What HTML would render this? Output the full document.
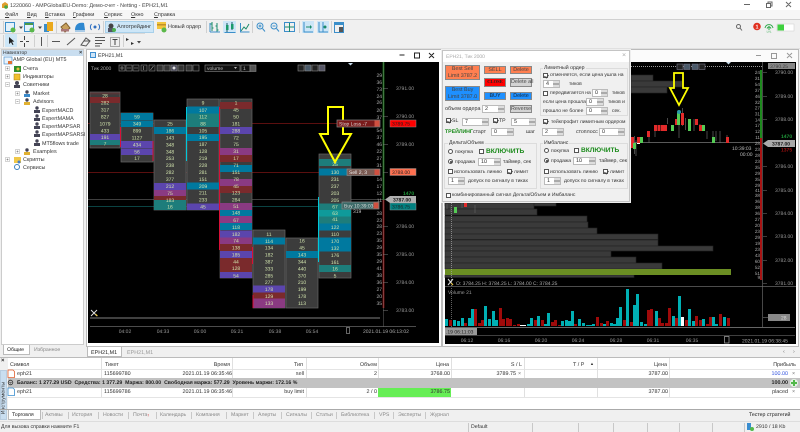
<!DOCTYPE html>
<html lang="ru"><head><meta charset="utf-8"><title>MT5</title>
<style>
*{box-sizing:border-box}
html,body{margin:0;padding:0;width:800px;height:432px;overflow:hidden;background:#f0f0f0}
body{position:relative;font-family:"Liberation Sans","DejaVu Sans",sans-serif;font-size:5.4px;color:#333;text-rendering:geometricPrecision;filter:blur(.3px)}
.t{position:absolute;white-space:nowrap;line-height:8px}
.b{position:absolute}
.sep{position:absolute;width:1px;background:#c8c8c8}
.btn{position:absolute;text-align:center;font-size:5.4px;color:#444;border:1px solid #888;white-space:nowrap}
.or{background:#ff7f50}.bl{background:#1e90ff}.gr{background:#d3d3d3}
.in{position:absolute;background:#fff;border:1px solid #bbb;height:8px;line-height:6px;font-size:5.4px;padding-left:2px;color:#333}
.in::after{content:"";position:absolute;right:0;top:0;width:6px;height:6px;background:linear-gradient(#ddd 0 2px,#777 2px 2.6px,#ddd 2.6px 3.4px,#777 3.4px 4px,#ddd 4px)}
.cb{position:absolute;width:5px;height:5px;background:#fff;border:.7px solid #555}
.cb.on::after{content:"";position:absolute;left:.6px;top:.1px;width:2px;height:3px;border:solid #444;border-width:0 .7px .7px 0;transform:rotate(40deg)}
.rd{position:absolute;width:5px;height:5px;background:#fff;border:.7px solid #555;border-radius:50%}
.rd.on::after{content:"";position:absolute;left:.8px;top:.8px;width:2px;height:2px;background:#333;border-radius:50%}
.gb{position:absolute;border:1px solid #dcdcdc}
.gt{position:absolute;background:#f0f0f0;padding:0 1px;line-height:6px;font-size:5.2px;white-space:nowrap}
.vv{color:#1a8a1a;font-weight:bold;font-size:6.6px}
.tab{position:absolute;top:411px;line-height:8px;color:#888;white-space:nowrap;font-size:5.2px}
svg{position:absolute;left:0;top:0}
</style></head>
<body>
<!-- top chrome -->
<div class="b" style="left:0;top:0;width:800px;height:10px;background:#fff"></div>
<div class="b" style="left:0;top:10px;width:800px;height:9px;background:#f6f6f6"></div>
<div class="b" style="left:0;top:19px;width:800px;height:1px;background:#d0d0d0"></div>
<div class="b" style="left:0;top:33px;width:145px;height:1px;background:#d8d8d8"></div>
<div class="b" style="left:0;top:48px;width:800px;height:1px;background:#e0e0e0"></div>
<div class="t" style="left:10px;top:2px;color:#444">1220060 - AMPGlobalEU-Demo: Демо-счет - Netting - EPH21,M1</div>
<div class="t" style="left:5px;top:11px"><u>Ф</u>айл</div>
<div class="t" style="left:27px;top:11px"><u>В</u>ид</div>
<div class="t" style="left:45px;top:11px"><u>В</u>ставка</div>
<div class="t" style="left:73px;top:11px"><u>Г</u>рафики</div>
<div class="t" style="left:104px;top:11px"><u>С</u>ервис</div>
<div class="t" style="left:131px;top:11px"><u>О</u>кно</div>
<div class="t" style="left:154px;top:11px"><u>С</u>правка</div>

<div class="b" style="left:105px;top:21px;width:49px;height:12px;background:#cde6f7;border:1px solid #a8d0ea"></div>
<div class="b" style="left:223px;top:21px;width:13px;height:12px;background:#cde6f7"></div>
<div class="b" style="left:302px;top:21px;width:12px;height:12px;background:#cde6f7"></div>
<div class="b" style="left:317px;top:21px;width:12px;height:12px;background:#cde6f7"></div>
<div class="b" style="left:5px;top:34px;width:12px;height:13px;background:#cde6f7"></div>
<div class="t" style="left:117px;top:23px">Алготрейдинг</div>
<div class="t" style="left:168px;top:23px">Новый ордер</div>

<!-- toolbar icons -->
<svg width="800" height="50" viewBox="0 0 800 50">
<path d="M2 4l3-2 3 2v4H2z" fill="#e0a030"/><circle cx="6" cy="7" r="1.800" fill="#4aa84a"/>
<g fill="none" stroke-width="1">
<rect x="5.500" y="22.500" width="9" height="9" stroke="#3b8ec9" fill="#e4f1fa"/><circle cx="13" cy="30" r="2.500" fill="#5bb84a"/>
<rect x="24.500" y="22.500" width="9" height="9" stroke="#3b8ec9" fill="#e4f1fa"/><rect x="25" y="23" width="8" height="2" fill="#4a9a48"/><circle cx="32" cy="30" r="2.500" fill="#5bb84a"/>
<rect x="44" y="24" width="5" height="8" fill="#3b8ec9"/><rect x="47" y="22" width="6" height="9" fill="#eaa91d"/>
<path d="M61 27l5-4 4 5-5 4z" fill="#c9a25e" stroke="#806030"/><rect x="61" y="29" width="8" height="2.500" fill="#a77"/>
<path d="M75 30c0-6 4-8 9-7l1 7z" fill="#2f88d0"/><rect x="75" y="30" width="10" height="2" fill="#aacbe6"/>
<circle cx="95" cy="27" r="1.500" fill="#2f6fc0"/><path d="M91.500 24c-1.500 2-1.500 4 0 6M98.500 24c1.500 2 1.500 4 0 6" stroke="#2f6fc0"/>
<path d="M19 26.500h4l-2 2.500zM38 26.500h4l-2 2.500z" fill="#444"/>
<circle cx="111" cy="26" r="2.500" fill="#444"/><rect x="108" y="28" width="6" height="4" fill="#556"/><circle cx="114" cy="30" r="2" fill="#4cb050"/>
<rect x="157" y="22" width="9" height="7" fill="#f2c53c"/><rect x="157" y="24" width="9" height="1.500" fill="#c0902a"/><circle cx="164" cy="30" r="2.500" fill="#5bb84a"/>
<path d="M212 22v9M212 24h-1.500M212 28h1.500M217 23v9M217 26h-1.500M217 30h1.500" stroke="#1a8a6a"/><path d="M210 32h10M210 32v-9" stroke="#3b8ec9"/>
<path d="M227 23v9M232 22v8" stroke="#1a5a6a"/><rect x="226" y="25" width="2.500" height="5" fill="#1c9a6a"/><rect x="231" y="24" width="2.500" height="5" fill="#1c9a6a"/><path d="M224.500 32.500h11" stroke="#3b8ec9"/>
<path d="M241 31l3-4 2 2 3-5" stroke="#1a8a6a"/><path d="M240.500 23v9h9" stroke="#3b8ec9"/>
<circle cx="260" cy="26" r="3" stroke="#3b8ec9"/><path d="M262.500 28.500l2.500 3M258.500 26h3M260 24.500v3" stroke="#3b8ec9"/>
<circle cx="274" cy="26" r="3" stroke="#3b8ec9"/><path d="M276.500 28.500l2.500 3M272.500 26h3" stroke="#3b8ec9"/>
<rect x="284.500" y="22.500" width="10" height="9" stroke="#3b8ec9"/><path d="M289.500 23v9M285 27h9" stroke="#1a8a6a"/>
<path d="M304 22v10h9" stroke="#3b8ec9"/><path d="M306 27h5" stroke="#1a8a6a"/><path d="M310 25l2 2-2 2z" fill="#1a8a6a"/>
<path d="M319 22v10h9M323 22v10" stroke="#3b8ec9"/><circle cx="325" cy="27" r="1.500" fill="#1a8a6a"/>
<rect x="334.500" y="22.500" width="9" height="10" stroke="#3b8ec9"/><rect x="335" y="23" width="8" height="2" fill="#3b8ec9"/><rect x="339" y="27" width="4" height="5" fill="#555"/>
<path d="M9 37v7l2-1.800 1.500 2.800 1-.5-1.500-2.800 2.300-.2z" fill="#222"/>
<path d="M24.500 36v4M24.500 43v4M20 41.500h3M26 41.500h3" stroke="#444"/>
<path d="M41.500 37v9" stroke="#555"/><path d="M52 41.500h8" stroke="#555"/><path d="M67 45l8-7" stroke="#555"/>
<path d="M81 45l5-7 4 3-4 5zM84 41h6" stroke="#555"/>
<path d="M95 37.500h10M95 40.500h10M95 43.500h7M95 46h5" stroke="#555"/>
<rect x="110.500" y="37.500" width="9" height="9" stroke="#aaa"/><path d="M112.500 39.500h5M115 39.500v5.500" stroke="#444"/>
<path d="M126 38l3 1.500-3 1.500zM131 42l3 1.500-3 1.500z" fill="#333"/><path d="M137 41h4l-2 2.500z" fill="#444"/>
</g>
<g stroke="#d0d0d0"><path d="M3.500 21v12M3.500 35v12M56.500 21v12M103.500 21v12M206.500 21v12M252.500 21v12M299.500 21v12M331.500 21v12M34.500 35v12M47.500 35v12M123.500 35v12"/></g>
<g fill="none" stroke="#666"><path d="M744 4.500h6"/><rect x="766.500" y="3.500" width="4" height="4"/><path d="M768 3.500v-1.500h4v4h-1.500M786 2l5 5M791 2l-5 5"/></g>
<circle cx="738.500" cy="26.500" r="2" fill="none" stroke="#666"/><path d="M740 28l2 2.500" stroke="#666"/>
<circle cx="757" cy="26.500" r="3.800" fill="#e03020"/><text x="757" y="28.500" font-size="5.500" fill="#fff" text-anchor="middle" font-weight="bold">1</text>
<path d="M765 28c1-4.500 7-4.500 8 0M767 28.500c1-2 3-2 4 0" fill="none" stroke="#2ea84a"/><path d="M769 26v4" stroke="#2ea84a"/><text x="769" y="32.500" font-size="2.800" fill="#2ea84a" text-anchor="middle">LVL</text>
<rect x="777" y="24" width="17" height="7" fill="#fff" stroke="#ccc" stroke-width=".5"/><rect x="777.500" y="24.500" width="6.500" height="6" fill="#3fd13f"/>
</svg>

<!-- navigator -->
<div class="b" style="left:1px;top:49px;width:83px;height:296px;background:#fff;border:1px solid #ccc"></div>
<div class="b" style="left:2px;top:50px;width:81px;height:6px;background:#c9def0"></div>
<div class="t" style="left:3px;top:49px;font-size:5px">Навигатор</div>
<div class="t" style="left:79px;top:48.500px;font-size:5.600px;font-weight:bold">×</div>
<div class="t" style="left:13px;top:56px">AMP Global (EU) MT5</div>
<div class="t" style="left:23px;top:65px">Счета</div>
<div class="t" style="left:23px;top:73px">Индикаторы</div>
<div class="t" style="left:23px;top:81px">Советники</div>
<div class="t" style="left:33px;top:90px">Market</div>
<div class="t" style="left:33px;top:98px">Advisors</div>
<div class="t" style="left:42px;top:107px">ExpertMACD</div>
<div class="t" style="left:42px;top:115px">ExpertMAMA</div>
<div class="t" style="left:42px;top:123px">ExpertMAPSAR</div>
<div class="t" style="left:42px;top:131px">ExpertMAPSARSI</div>
<div class="t" style="left:42px;top:140px">MT5flows trade</div>
<div class="t" style="left:33px;top:148px">Examples</div>
<div class="t" style="left:23px;top:156px">Скрипты</div>
<div class="t" style="left:23px;top:164px">Сервисы</div>
<svg width="90" height="175" viewBox="0 0 90 175">
<rect x="4" y="57" width="8" height="7" fill="#e8f2fb" stroke="#4a90d0" stroke-width=".7"/><rect x="8" y="61" width="4" height="3" fill="#e07030"/>
<g fill="#2d8f2d"><rect x="14" y="66" width="7" height="6"/></g><circle cx="18" cy="69" r="1.500" fill="#e8c040"/>
<rect x="14" y="74" width="6" height="6" fill="#f0c030" stroke="#a88010" stroke-width=".5"/>
<g fill="#445"><circle cx="17" cy="83" r="2"/><rect x="14" y="85" width="6" height="3"/><circle cx="27" cy="92" r="1.700"/><rect x="24" y="94" width="6" height="3" fill="#3a88c8"/><circle cx="27" cy="100" r="1.700"/><rect x="24" y="102" width="6" height="3" fill="#e0b030"/><circle cx="27" cy="150" r="1.700"/><rect x="24" y="152" width="6" height="3" fill="#e0b030"/>
<circle cx="37" cy="108" r="1.700"/><rect x="34" y="110" width="6" height="3"/><circle cx="37" cy="116" r="1.700"/><rect x="34" y="118" width="6" height="3"/><circle cx="37" cy="124" r="1.700"/><rect x="34" y="126" width="6" height="3"/><circle cx="37" cy="132" r="1.700"/><rect x="34" y="134" width="6" height="3"/><circle cx="37" cy="141" r="1.700"/><rect x="34" y="143" width="6" height="3"/></g>
<rect x="14" y="157" width="7" height="6" fill="#f0c848"/><circle cx="19" cy="162" r="1.500" fill="#4a80c0"/>
<circle cx="17" cy="167" r="2.500" fill="none" stroke="#3a80c0"/>
<g fill="#fff" stroke="#aaa" stroke-width=".5"><rect x="5.500" y="66.500" width="4" height="4"/><rect x="5.500" y="74.500" width="4" height="4"/><rect x="5.500" y="82.500" width="4" height="4"/><rect x="15.500" y="91.500" width="4" height="4"/><rect x="15.500" y="99.500" width="4" height="4"/><rect x="15.500" y="149.500" width="4" height="4"/><rect x="5.500" y="157.500" width="4" height="4"/></g>
<g stroke="#666" stroke-width=".5"><path d="M6.500 68.500h2M6.500 76.500h2M6.500 84.500h2M16.500 93.500h2M16.500 101.500h2M16.500 151.500h2M6.500 159.500h2M7.500 67.500v2M7.500 75.500v2M17.500 92.500v2M17.500 150.500v2M7.500 158.500v2"/></g>
</svg>
<div class="b" style="left:3px;top:345px;width:27px;height:10px;background:#fff;border:1px solid #bbb;border-top:0"></div>
<div class="t" style="left:7px;top:346px;font-size:5.200px;color:#222">Общие</div>
<div class="t" style="left:34px;top:346px;font-size:5.200px;color:#888">Избранное</div>

<!-- left chart window -->
<div class="b" style="left:86px;top:49px;width:356px;height:298px;background:#fff;border:1px solid #bbb"></div>
<div class="b" style="left:90px;top:52px;width:6px;height:6px;background:#cfe4f6;border:1px solid #3f8ed0"></div>
<div class="t" style="left:98px;top:52px;font-size:5.200px">EPH21,M1</div>

<!-- right chart window frame -->
<div class="b" style="left:442px;top:49px;width:357px;height:298px;background:#fbfbfb;border:1px solid #bbb"></div>

<svg width="800" height="432" viewBox="0 0 800 432" font-family="'Liberation Sans',sans-serif" font-size="5">
<!-- black backgrounds -->
<rect x="88" y="62" width="351" height="281" fill="#000"/>
<rect x="445" y="62" width="351" height="282" fill="#000"/>
<path d="M399.500 55h5M414.500 53h5v5h-5zM429 53l5 5M434 53l-5 5" stroke="#222" fill="none"/>
<path d="M756 55.500h5M771.500 53.500h5v5h-5zM787 53l5 5M792 53l-5 5" stroke="#999" fill="none"/>

<!-- horizontal levels left -->
<g stroke-width=".7">
<path d="M88 123.500H337" stroke="#7a1414"/>
<path d="M88 172.500H347" stroke="#7a1414"/>
<path d="M88 199.500H385" stroke="#555"/>
<path d="M88 206.500H342" stroke="#0f5a5a"/>
</g>

<!-- footprint columns -->
<g fill="#3c3c3c" stroke="#666" stroke-width=".7">
<rect x="90" y="92" width="30" height="56"/>
<rect x="121" y="113" width="32" height="49"/>
<rect x="154" y="120" width="32" height="90"/>
<rect x="187" y="99" width="32" height="111"/>
<rect x="220" y="99" width="32" height="179"/>
<rect x="253" y="230" width="32" height="78"/>
<rect x="286" y="238" width="32" height="70"/>
<rect x="319" y="154" width="32" height="124"/>
</g>
<!-- coloured rows -->
<g fill="#00799f">
<rect x="121" y="113" width="32" height="7"/><rect x="121" y="120.500" width="32" height="6.500"/>
<rect x="154" y="127" width="32" height="7"/>
<rect x="187" y="106.500" width="32" height="7"/><rect x="187" y="134" width="32" height="7"/><rect x="187" y="182.500" width="32" height="7"/>
<rect x="253" y="237.500" width="32" height="7"/>
<rect x="286" y="251" width="32" height="7"/>
<rect x="319" y="168.500" width="32" height="7"/><rect x="319" y="223.500" width="32" height="7"/><rect x="319" y="237.500" width="32" height="7"/><rect x="319" y="244.500" width="32" height="7"/>
<rect x="220" y="165" width="32" height="7"/><rect x="220" y="209" width="32" height="7"/><rect x="220" y="223" width="32" height="7"/>
</g>
<g fill="#5b45ad">
<rect x="90" y="134" width="30" height="6"/>
<rect x="121" y="141" width="32" height="7"/><rect x="121" y="148.500" width="32" height="6.500"/>
<rect x="154" y="183" width="32" height="7"/>
<rect x="187" y="203.500" width="32" height="6.500"/>
<rect x="220" y="127" width="32" height="7"/><rect x="220" y="230.500" width="32" height="7"/><rect x="220" y="251" width="32" height="7"/><rect x="220" y="272" width="32" height="6"/>
<rect x="253" y="285.500" width="32" height="7"/>
</g>
<g fill="#7a2a2c">
<rect x="90" y="97" width="30" height="6"/><rect x="90" y="92.500" width="30" height="2" opacity=".4"/>
<rect x="154" y="196" width="32" height="4"/>
<rect x="220" y="102" width="32" height="7"/><rect x="220" y="155" width="32" height="7"/><rect x="220" y="186" width="32" height="7"/>
<rect x="220" y="244" width="32" height="7"/><rect x="220" y="258" width="32" height="7"/><rect x="220" y="265" width="32" height="7"/>
<rect x="253" y="292.500" width="32" height="6"/>
</g>
<g fill="#8a3a82">
<rect x="154" y="190" width="32" height="6"/>
<rect x="220" y="148" width="32" height="7"/><rect x="220" y="179" width="32" height="7"/><rect x="220" y="203" width="32" height="7"/><rect x="220" y="216" width="32" height="7"/><rect x="220" y="237.500" width="32" height="6.500"/>
<rect x="253" y="298.500" width="32" height="9.500"/>
</g>
<g fill="#1d7d7b">
<rect x="90" y="140" width="30" height="5"/>
<rect x="154" y="200" width="32" height="10"/>
<rect x="187" y="113.500" width="32" height="7"/><rect x="187" y="120.500" width="32" height="6.500"/>
<rect x="319" y="159" width="32" height="7"/><rect x="319" y="203.500" width="32" height="6.500"/><rect x="319" y="210" width="32" height="6.500" fill="#0f9a9a"/><rect x="319" y="216.500" width="32" height="7"/><rect x="319" y="265" width="32" height="7"/>
</g>
<!-- side strips -->
<g stroke-width="1">
<path d="M120.500 127v20M153 141v20M219.500 107v143M252.500 247v17M253 295v13" stroke="#d81038"/>
<path d="M186.500 107v54M318.500 197v65" stroke="#00c8d8"/>
</g>
<!-- numbers -->
<g fill="#d0e2ac" text-anchor="middle">
<text x="105" y="97.500">28</text><text x="105" y="104.500">282</text><text x="105" y="111.500">317</text><text x="105" y="118.500">827</text><text x="105" y="125.500">1079</text><text x="105" y="132.500">433</text><text x="105" y="139">191</text><text x="105" y="145.500">7</text>
<text x="137" y="118.500">59</text><text x="137" y="125.500">349</text><text x="137" y="132.500">899</text><text x="137" y="139.500">1127</text><text x="137" y="146.500">434</text><text x="137" y="153.500">56</text><text x="137" y="160">17</text>
<text x="170" y="125.500">25</text><text x="170" y="132.500">186</text><text x="170" y="139.500">143</text><text x="170" y="146.500">348</text><text x="170" y="153.500">348</text><text x="170" y="160">253</text><text x="170" y="167">238</text><text x="170" y="174">282</text><text x="170" y="181">377</text><text x="170" y="188">212</text><text x="170" y="195">75</text><text x="170" y="202">183</text><text x="170" y="208.500">16</text>
<text x="203" y="104.500">9</text><text x="203" y="112">107</text><text x="203" y="118.500">112</text><text x="203" y="125.500">88</text><text x="203" y="132.500">105</text><text x="203" y="139">195</text><text x="203" y="146">187</text><text x="203" y="153">128</text><text x="203" y="160">219</text><text x="203" y="167">228</text><text x="203" y="174">281</text><text x="203" y="181">151</text><text x="203" y="188">209</text><text x="203" y="194.500">211</text><text x="203" y="201.500">233</text><text x="203" y="208.500">45</text>
<text x="236" y="104.500">1</text><text x="236" y="111.500">45</text><text x="236" y="118.500">50</text><text x="236" y="125.500">181</text><text x="236" y="132.500">288</text><text x="236" y="139.500">72</text><text x="236" y="146">75</text><text x="236" y="153">31</text><text x="236" y="160">17</text><text x="236" y="167">71</text><text x="236" y="174">151</text><text x="236" y="181">78</text><text x="236" y="188">45</text><text x="236" y="194.500">123</text><text x="236" y="201.500">284</text><text x="236" y="208">51</text><text x="236" y="214.500">148</text><text x="236" y="222">67</text><text x="236" y="229">118</text><text x="236" y="236">182</text><text x="236" y="242.500">74</text><text x="236" y="249.500">138</text><text x="236" y="256.500">185</text><text x="236" y="263.500">44</text><text x="236" y="270">128</text><text x="236" y="277.500">54</text>
<text x="269" y="236">11</text><text x="269" y="243">114</text><text x="269" y="249.500">134</text><text x="269" y="256.500">182</text><text x="269" y="263.500">387</text><text x="269" y="270.500">333</text><text x="269" y="277.500">285</text><text x="269" y="284">277</text><text x="269" y="291">178</text><text x="269" y="298">129</text><text x="269" y="305">133</text>
<text x="302" y="242.500">16</text><text x="302" y="249.500">45</text><text x="302" y="256.500">143</text><text x="302" y="263.500">344</text><text x="302" y="270.500">440</text><text x="302" y="277.500">370</text><text x="302" y="284">210</text><text x="302" y="291">199</text><text x="302" y="298">178</text><text x="302" y="305">113</text>
<text x="335" y="166">25</text><text x="335" y="174">130</text><text x="335" y="181">231</text><text x="335" y="188">237</text><text x="335" y="195">203</text><text x="335" y="202">205</text><text x="335" y="208.500">67</text><text x="335" y="215">63</text><text x="335" y="221">41</text><text x="335" y="229">122</text><text x="335" y="236">110</text><text x="335" y="243">170</text><text x="335" y="250">132</text><text x="335" y="257">176</text><text x="335" y="264">161</text><text x="335" y="270.500">16</text><text x="335" y="277.500">5</text>
</g>

<!-- left yellow arrow -->
<path d="M328 107h15v27h8l-16 28-15-28h8z" fill="none" stroke="#ffff00" stroke-width="2"/>

<!-- left axis -->
<path d="M383.500 62v138" stroke="#1e8a1e" stroke-width="1.600"/>
<path d="M383.500 200v108" stroke="#a81414" stroke-width="1.600"/>
<path d="M383.500 62v265" stroke="#666" stroke-width=".5"/>
<g stroke="#777" stroke-width=".6"><path d="M383 88.500h5M383 116.500h5M383 144.500h5M383 172.500h5M383 226.500h5M383 254.500h5M383 282.500h5M383 310.500h5"/></g>
<g fill="#aaa" text-anchor="end">
<text x="382" y="77">29</text><text x="382" y="84">36</text><text x="382" y="91">73</text><text x="382" y="98">24</text><text x="382" y="104">26</text><text x="382" y="112">20</text><text x="382" y="119">37</text><text x="382" y="132">54</text><text x="382" y="139">37</text><text x="382" y="146">46</text><text x="382" y="153">22</text><text x="382" y="160">27</text><text x="382" y="167">31</text><text x="382" y="181">14</text><text x="382" y="188">17</text><text x="382" y="195">12</text><text x="382" y="202">11</text><text x="382" y="215">28</text><text x="382" y="222">23</text><text x="382" y="228">28</text><text x="382" y="235">23</text><text x="382" y="242">35</text><text x="382" y="249">29</text><text x="382" y="256">35</text><text x="382" y="263">29</text><text x="382" y="270">41</text><text x="382" y="277">38</text><text x="382" y="284">36</text><text x="382" y="291">27</text><text x="382" y="298">20</text><text x="382" y="305">35</text>
</g>
<g fill="#999"><text x="396" y="90">3791.00</text><text x="396" y="118">3790.00</text><text x="396" y="146">3789.00</text><text x="396" y="228">3786.00</text><text x="396" y="256">3785.00</text><text x="396" y="284">3784.00</text><text x="396" y="312">3783.00</text></g>
<!-- order labels -->
<rect x="337" y="120" width="43" height="7" fill="#7a1a1a" stroke="#888" stroke-width=".7"/><text x="339" y="125.500" fill="#ddd">Stop Loss  -7</text><rect x="374.500" y="120.500" width="5" height="6" fill="#d05040"/>
<rect x="390" y="120" width="26" height="7" fill="#ff0000" stroke="#888" stroke-width=".5"/><text x="392" y="125.500" fill="#222">3789.75</text>
<rect x="347" y="169" width="33" height="6.500" fill="#7a5a52" stroke="#888" stroke-width=".7"/><text x="349" y="174" fill="#eee">Sell  2,  3</text><rect x="374.500" y="169.500" width="5" height="5.500" fill="#d05040"/>
<rect x="390" y="168.500" width="26" height="7" fill="#ff7050" stroke="#888" stroke-width=".5"/><text x="392" y="174" fill="#222">3788.00</text>
<rect x="342" y="202" width="37" height="7" fill="#3c6a68" stroke="#888" stroke-width=".7"/><text x="344" y="207.500" fill="#ddd">Buy  10:39:03</text><rect x="373.500" y="202.500" width="5" height="6" fill="#d05040"/>
<text x="353" y="213" fill="#bbb">319</text>
<rect x="390" y="203" width="26" height="7" fill="#008080" stroke="#888" stroke-width=".5"/><text x="392" y="208.500" fill="#222">3786.75</text>
<text x="403" y="195" fill="#1f9a3a" font-weight="bold">1470</text>
<path d="M385 199.500l5-3.500h26v7h-26z" fill="#b0b0b0"/><text x="393" y="201.500" fill="#111" font-weight="bold">3787.00</text>
<!-- chart toolbar left -->
<text x="91" y="70" fill="#aaa">Тик  2000</text>
<g fill="#111" stroke="#888" stroke-width=".6">
<rect x="119" y="65" width="6" height="6"/><rect x="126" y="65" width="6" height="6"/><rect x="133" y="65" width="6" height="6"/><rect x="141" y="65" width="6" height="6"/><rect x="149" y="65" width="6" height="6"/><rect x="157" y="65" width="6" height="6" fill="#333"/><rect x="164" y="65" width="6" height="6" fill="#333"/><rect x="171" y="65" width="6" height="6" fill="#445"/><rect x="178" y="65" width="6" height="6" fill="#333"/><rect x="186" y="65" width="6" height="6" fill="#333"/><rect x="193" y="65" width="6" height="6"/>
<rect x="205" y="65" width="35" height="6.500"/><rect x="241" y="65" width="9" height="6.500"/><rect x="250" y="65" width="6" height="6.500" fill="#555"/>
<rect x="298" y="65" width="6" height="6" fill="#222"/><rect x="305" y="65" width="6" height="6" fill="#4a5a6a"/><rect x="312" y="65" width="6" height="6" fill="#222"/><rect x="319" y="65" width="6" height="6" fill="#556"/>
</g>
<path d="M120 68h4M122 66v4M127 68h4M134 68h4M143.500 66v4M150.500 70l3-4" stroke="#aaa" stroke-width=".6"/>
<circle cx="174" cy="68" r="1.500" fill="#ddd"/>
<text x="207" y="70" fill="#bbb">volume</text><text x="243" y="70" fill="#bbb">1</text>
<path d="M234 67h3l-1.500 2z" fill="#bbb"/>
<path d="M348 63h5l-2.500 2.500z" fill="#c8dcec"/>
<!-- pick icon -->
<path d="M91 310l6 6M97 310l-6 6" stroke="#ddd" stroke-width="1"/><path d="M95.500 314l2 2" stroke="#e8c030"/>
<!-- left bottom -->
<path d="M90 317.500H380M90 318.500H380" stroke="#555" stroke-width=".7"/>
<path d="M90 326.500H416" stroke="#666" stroke-width=".7"/>
<g fill="#999" text-anchor="middle"><text x="125" y="333">04:02</text><text x="163" y="333">04:33</text><text x="200" y="333">05:00</text><text x="237" y="333">05:21</text><text x="275" y="333">05:38</text><text x="312" y="333">05:54</text></g>
<rect x="346.500" y="327.500" width="3" height="6" fill="none" stroke="#aaa" stroke-width=".6"/>
<text x="363" y="333" fill="#aaa">2021.01.19 06:13:02</text>

<!-- ============ right chart ============ -->
<g fill="#3a3a3a" stroke="#222" stroke-width=".6">
<rect x="631" y="75" width="22" height="6"/><rect x="631" y="81" width="51" height="6"/><rect x="631" y="87" width="36" height="6"/>
<rect x="445" y="203" width="111" height="3"/><rect x="445" y="203" width="89" height="6"/><rect x="445" y="209" width="92" height="6"/>
<rect x="445" y="216" width="142" height="6"/><rect x="445" y="222" width="143" height="6"/><rect x="445" y="228" width="152" height="6"/>
<rect x="445" y="234" width="213" height="5.500"/><rect x="445" y="240" width="213" height="6"/><rect x="445" y="246" width="268" height="5"/>
<rect x="445" y="251" width="166" height="6"/><rect x="445" y="257" width="191" height="6"/><rect x="445" y="263" width="217" height="6"/>
<rect x="445" y="275" width="189" height="2.500"/>
</g>
<rect x="445" y="269" width="286" height="6" fill="#6b8e23"/>
<path d="M445 66.500H762" stroke="#ccc" stroke-width=".7" stroke-dasharray="1 1"/>
<path d="M451.500 203V287" stroke="#aaa" stroke-width=".7" stroke-dasharray="1 1"/>
<path d="M451.500 288V335" stroke="#888" stroke-width=".7" stroke-dasharray="1 1"/>
<path d="M445 142.500H762" stroke="#777" stroke-width=".7"/>
<!-- candles -->
<g stroke="#777" stroke-width=".6">
<path d="M634.500 136v18M636 140v16M649 131v12M655 125v12M654.500 125v5M667.500 118v6M679 110v17M679 127v11M682.500 108v18M685.500 118v12M694 119v12M700 124v6M707 131v8M713 131v12M716 131v10M720 131v12M727 135v8"/>
<path d="M447 204v5M451 207v5M462 203v5M475 205v8" stroke="#666"/>
</g>
<g fill="#e22b2b">
<rect x="631" y="137" width="3" height="11"/><rect x="637" y="137" width="3" height="6"/><rect x="647" y="131" width="3" height="6"/><rect x="654" y="125" width="3" height="6"/><rect x="657.500" y="125" width="3" height="6"/><rect x="661" y="125" width="3" height="6"/><rect x="664" y="125" width="3" height="6"/><rect x="675" y="119" width="3" height="6"/><rect x="681" y="113" width="3" height="12"/><rect x="695" y="119" width="3" height="6"/><rect x="699" y="125" width="3" height="6"/><rect x="726" y="137" width="3" height="6"/>
<rect x="464" y="202" width="3" height="5"/>
</g>
<g fill="#55cc55">
<rect x="633" y="143" width="3" height="6"/><rect x="640" y="137" width="3" height="6"/><rect x="671" y="125" width="3" height="6"/><rect x="677" y="113" width="3" height="12"/><rect x="688" y="119" width="3" height="12"/><rect x="702" y="125" width="3" height="6"/><rect x="712" y="137" width="3" height="6"/>
<rect x="454" y="207" width="3" height="6"/>
</g>
<rect x="637" y="143" width="3" height="1" fill="#fff"/>
<circle cx="679" cy="112" r="2" fill="#2a9aa8"/>
<path d="M674 73h9v15h5l-9 17-9-17h4z" fill="none" stroke="#ffff00" stroke-width="1.800"/>
<g fill="#222" stroke="#778" stroke-width=".6"><rect x="677" y="64" width="6" height="5.500"/><rect x="684" y="64" width="6" height="5.500" fill="#4a5a6a"/><rect x="692" y="64" width="6" height="5.500" fill="#4a5a6a"/><rect x="699" y="64" width="6" height="5.500"/></g>
<path d="M726 62h5l-2.500 2.500z" fill="#c8dcec"/>
<!-- right axis -->
<path d="M761 70v68" stroke="#1e8a1e" stroke-width="2"/>
<path d="M761 138v142" stroke="#a81414" stroke-width="2"/>
<path d="M762.500 62v265" stroke="#666" stroke-width=".7"/>
<path d="M763 72.500h4M763 96.500h4M763 119.500h4M763 166.500h4M763 190.500h4M763 213.500h4M763 236.500h4M763 260.500h4M763 283.500h4" stroke="#777" stroke-width=".6"/>
<g fill="#aaa" text-anchor="end" font-size="4.600">
<text x="760" y="74">24</text><text x="760" y="80">31</text><text x="760" y="86">54</text><text x="760" y="92">37</text><text x="760" y="98">46</text><text x="760" y="104">32</text><text x="760" y="109.500">27</text><text x="760" y="115.500">31</text><text x="760" y="121.500">14</text><text x="760" y="127">17</text><text x="760" y="133">12</text><text x="760" y="139">11</text><text x="760" y="145">28</text><text x="760" y="151">23</text><text x="760" y="157">28</text><text x="760" y="163">23</text><text x="760" y="169">35</text><text x="760" y="175">29</text><text x="760" y="181">35</text><text x="760" y="187">29</text><text x="760" y="192">41</text><text x="760" y="197">38</text><text x="760" y="203">36</text><text x="760" y="209">38</text><text x="760" y="215">36</text><text x="760" y="221">27</text><text x="760" y="227">20</text><text x="760" y="233">23</text><text x="760" y="239">29</text><text x="760" y="245">19</text><text x="760" y="251">23</text><text x="760" y="257">43</text><text x="760" y="263">60</text><text x="760" y="269">52</text><text x="760" y="275">51</text><text x="760" y="279">9</text>
</g>
<g fill="#999"><text x="775" y="74">3790.00</text><text x="775" y="98">3789.00</text><text x="775" y="121">3788.00</text><text x="775" y="168">3786.00</text><text x="775" y="192">3785.00</text><text x="775" y="215">3784.00</text><text x="775" y="238">3783.00</text><text x="775" y="262">3782.00</text><text x="775" y="285">3781.00</text></g>
<rect x="768" y="63" width="27" height="6" fill="#888"/><text x="770" y="68" fill="#444">3790.25</text>
<text x="781" y="138" fill="#1f9a3a" font-weight="bold">1470</text><text x="781" y="151.500" fill="#a01010" font-weight="bold">1375</text>
<path d="M763 143.500l5-3.500h27v7h-27z" fill="#aaa"/><text x="772" y="145.500" fill="#111" font-weight="bold">3787.00</text>
<text x="732" y="150" fill="#bbb">10:39:03</text><text x="740" y="156" fill="#bbb">00:00</text>
<!-- lower right -->
<path d="M448 279l5 6M453 279l-5 6" stroke="#ddd"/><path d="M451 283l2 2" stroke="#e8c030"/>
<text x="456" y="285" fill="#aaa">O: 3784.25   H: 3784.25   L: 3784.00   C: 3784.25</text>
<path d="M445 286.500H796" stroke="#666" stroke-width=".8"/>
<text x="448" y="294" fill="#999">Volume 21</text>
<!-- volume bars -->
<g fill="#00b0b4">
<rect x="445" y="319" width="3" height="7"/><rect x="453" y="320" width="3" height="6"/><rect x="457" y="321" width="3" height="5"/><rect x="461" y="318" width="3" height="8"/><rect x="468" y="318" width="3" height="8"/><rect x="471" y="309" width="3" height="17"/><rect x="484" y="306" width="3" height="20"/><rect x="488" y="319" width="3" height="7"/><rect x="492" y="311" width="3" height="15"/><rect x="495" y="320" width="3" height="6"/><rect x="527" y="324" width="3" height="2"/><rect x="530" y="318" width="3" height="8"/><rect x="537" y="316" width="3" height="10"/><rect x="544" y="324" width="3" height="2"/><rect x="547" y="313" width="3" height="13"/><rect x="561" y="321" width="3" height="5"/><rect x="565" y="320" width="3" height="6"/><rect x="568" y="321" width="3" height="5"/><rect x="571" y="311" width="3" height="15"/><rect x="578" y="319" width="3" height="7"/><rect x="582" y="323" width="3" height="3"/><rect x="586" y="325" width="3" height="1"/><rect x="589" y="325" width="3" height="1"/><rect x="592" y="324" width="3" height="2"/><rect x="603" y="324" width="3" height="2"/><rect x="610" y="323" width="3" height="3"/><rect x="613" y="324" width="3" height="2"/><rect x="616" y="318" width="3" height="8"/><rect x="619" y="307" width="3" height="19"/><rect x="626" y="289" width="3" height="37"/><rect x="633" y="305" width="3" height="21"/><rect x="636" y="294" width="3" height="32"/><rect x="640" y="322" width="3" height="4"/><rect x="644" y="324" width="3" height="2"/><rect x="655" y="311" width="3" height="15"/><rect x="672" y="316" width="3" height="10"/><rect x="678" y="296" width="3" height="30"/><rect x="688" y="309" width="3" height="17"/><rect x="692" y="321" width="3" height="5"/><rect x="702" y="319" width="3" height="7"/><rect x="712" y="317" width="3" height="9"/><rect x="715" y="324" width="3" height="2"/><rect x="723" y="317" width="3" height="9"/>
</g>
<g fill="#a00a0a">
<rect x="449" y="320" width="3" height="6"/><rect x="464" y="323" width="3" height="3"/><rect x="474" y="309" width="3" height="17"/><rect x="478" y="323" width="3" height="3"/><rect x="481" y="320" width="3" height="6"/><rect x="499" y="308" width="3" height="18"/><rect x="502" y="319" width="3" height="7"/><rect x="506" y="318" width="3" height="8"/><rect x="509" y="319" width="3" height="7"/><rect x="513" y="325" width="3" height="1"/><rect x="517" y="324" width="3" height="2"/><rect x="534" y="320" width="3" height="6"/><rect x="541" y="320" width="3" height="6"/><rect x="551" y="322" width="3" height="4"/><rect x="554" y="320" width="3" height="6"/><rect x="558" y="325" width="3" height="1"/><rect x="574" y="324" width="3" height="2"/><rect x="596" y="317" width="3" height="9"/><rect x="600" y="323" width="3" height="3"/><rect x="606" y="321" width="3" height="5"/><rect x="623" y="320" width="3" height="6"/><rect x="630" y="322" width="3" height="4"/><rect x="647" y="310" width="3" height="16"/><rect x="650" y="309" width="3" height="17"/><rect x="658" y="318" width="3" height="8"/><rect x="661" y="323" width="3" height="3"/><rect x="665" y="323" width="3" height="3"/><rect x="668" y="308" width="3" height="18"/><rect x="675" y="318" width="3" height="8"/><rect x="685" y="320" width="3" height="6"/><rect x="695" y="316" width="3" height="10"/><rect x="699" y="320" width="3" height="6"/><rect x="706" y="324" width="3" height="2"/><rect x="709" y="317" width="3" height="9"/><rect x="719" y="314" width="3" height="12"/><rect x="727" y="318" width="3" height="8"/>
</g>
<rect x="520" y="325" width="3" height="1" fill="#fff"/><rect x="523" y="325" width="3" height="1" fill="#fff"/><rect x="681" y="317" width="3" height="9" fill="#fff"/>
<path d="M445 327.500H795" stroke="#888" stroke-width=".8"/>
<rect x="768" y="314" width="22" height="7" fill="#888"/><text x="781" y="319.500" fill="#ddd">28</text>
<path d="M763 317.500h5" stroke="#777" stroke-width=".6"/>
<rect x="445" y="328" width="32" height="7" fill="#999"/><text x="446" y="333.500" fill="#222">.19 06:11:03</text>
<path d="M445 335.500H795" stroke="#555" stroke-width=".7"/>
<g fill="#999" text-anchor="middle"><text x="467" y="342">06:12</text><text x="504" y="342">06:16</text><text x="541" y="342">06:20</text><text x="578" y="342">06:24</text><text x="616" y="342">06:28</text><text x="653" y="342">06:31</text><text x="692" y="342">06:35</text></g>
<rect x="724.500" y="336.500" width="4.500" height="6.500" fill="none" stroke="#aaa" stroke-width=".7"/>
<text x="742" y="342.500" fill="#aaa">2021.01.19 06:38:45</text>
</svg>

<!-- dialog -->
<div class="b" style="left:442px;top:50px;width:188px;height:152px;background:#f0f0f0;border:1px solid #c4c4c4;box-shadow:0 0 0 1px #eee"></div>
<div class="b" style="left:443px;top:51px;width:186px;height:11px;background:#fff"></div>
<div class="t" style="left:446px;top:53px;color:#aaa;font-size:5px">EPH21, Тик  2000</div>
<div class="t" style="left:622px;top:52px;color:#aaa;font-size:7px">×</div>

<div class="btn or" style="left:445px;top:65px;width:35px;height:15px;line-height:6.500px">Best Sell<br>Limit 3787.2</div>
<div class="btn bl" style="left:445px;top:86px;width:35px;height:15px;line-height:6.500px">Best Buy<br>Limit 3787.0</div>
<div class="btn or" style="left:484px;top:66px;width:22px;height:8px;line-height:6px">SELL</div>
<div class="btn" style="left:484px;top:78px;width:22px;height:9px;line-height:7px;background:#ff0000;color:#222;font:bold 4.600px 'Liberation Serif',serif">CLOSE</div>
<div class="btn bl" style="left:484px;top:92px;width:22px;height:8px;line-height:6px;color:#123">BUY</div>
<div class="btn or" style="left:510px;top:66px;width:22px;height:8px;line-height:6px">Delete</div>
<div class="btn gr" style="left:510px;top:78px;width:22px;height:9px;line-height:7px">Delete all</div>
<div class="btn bl" style="left:510px;top:92px;width:22px;height:8px;line-height:6px;color:#123">Delete</div>
<div class="btn gr" style="left:510px;top:105px;width:22px;height:8px;line-height:6px">Reverse</div>
<div class="t" style="left:445px;top:105px;font-size:5.400px">объем ордера</div>
<div class="in" style="left:482px;top:105px;width:23px">2</div>

<div class="cb on" style="left:446px;top:118px"></div><div class="t" style="left:452px;top:117px;font-size:5.200px">SL</div>
<div class="in" style="left:462px;top:118px;width:27px">7</div>
<div class="cb on" style="left:493px;top:118px"></div><div class="t" style="left:499px;top:117px;font-size:5.200px">TP</div>
<div class="in" style="left:511px;top:118px;width:25px">5</div>

<div class="t" style="left:445px;top:128px;color:#1a8a1a;font-weight:bold;font-size:5.200px">ТРЕЙЛИНГ</div>
<div class="t" style="left:473px;top:128px;font-size:5.200px">старт</div>
<div class="in" style="left:491px;top:128px;width:23px">0</div>
<div class="t" style="left:526px;top:128px;font-size:5.200px">шаг</div>
<div class="in" style="left:542px;top:128px;width:22px">2</div>
<div class="t" style="left:576px;top:128px;font-size:5.200px">стоплосс</div>
<div class="in" style="left:599px;top:128px;width:26px">0</div>

<div class="gb" style="left:540px;top:68px;width:88px;height:48px"></div>
<div class="gt" style="left:543px;top:65px">Лимитный ордер</div>
<div class="cb on" style="left:543px;top:73px"></div>
<div class="t" style="left:550px;top:71px;font-size:5px">отменяется, если цена ушла на</div>
<div class="in" style="left:543px;top:80px;width:17px">4</div>
<div class="t" style="left:569px;top:80px;font-size:5px">тиков</div>
<div class="cb" style="left:543px;top:91px"></div>
<div class="t" style="left:550px;top:89px;font-size:5px">передвигается на</div>
<div class="in" style="left:592px;top:89px;width:16px">0</div>
<div class="t" style="left:612px;top:89px;font-size:5px">тиков</div>
<div class="t" style="left:543px;top:98px;font-size:5px">если цена прошла</div>
<div class="in" style="left:586px;top:98px;width:18px">0</div>
<div class="t" style="left:608px;top:98px;font-size:5px">тиков и</div>
<div class="t" style="left:543px;top:107px;font-size:5px">прошло не более</div>
<div class="in" style="left:586px;top:107px;width:22px">0</div>
<div class="t" style="left:612px;top:107px;font-size:5px">сек.</div>
<div class="cb on" style="left:543px;top:119px"></div>
<div class="t" style="left:551px;top:118px;font-size:5px">тейкпрофит лимитным ордером</div>

<div class="gb" style="left:444px;top:143px;width:93px;height:46px"></div>
<div class="gt" style="left:448px;top:140px">Дельта/Объем</div>
<div class="rd" style="left:448px;top:149px"></div><div class="t" style="left:455px;top:148px;font-size:5px">покупка</div>
<div class="cb" style="left:479px;top:149px"></div><div class="t vv" style="left:486px;top:148px">ВКЛЮЧИТЬ</div>
<div class="rd on" style="left:448px;top:159px"></div><div class="t" style="left:455px;top:158px;font-size:5px">продажа</div>
<div class="in" style="left:478px;top:158px;width:23px">10</div><div class="t" style="left:503px;top:158px;font-size:5.200px">таймер, сек</div>
<div class="cb" style="left:448px;top:169px"></div><div class="t" style="left:454px;top:167.500px;font-size:5px">использовать линию</div>
<div class="cb on" style="left:507px;top:169px"></div><div class="t" style="left:514px;top:167.500px;font-size:5px">лимит</div>
<div class="in" style="left:448px;top:177px;width:17px">1</div><div class="t" style="left:468px;top:177px;font-size:5px">допуск по сигналу в тиках</div>

<div class="gb" style="left:540px;top:143px;width:88px;height:46px"></div>
<div class="gt" style="left:543px;top:140px">Имбаланс</div>
<div class="rd" style="left:544px;top:148px"></div><div class="t" style="left:551px;top:146.500px;font-size:5px">покупка</div>
<div class="cb" style="left:574px;top:148px"></div><div class="t vv" style="left:581px;top:147px">ВКЛЮЧИТЬ</div>
<div class="rd on" style="left:544px;top:158px"></div><div class="t" style="left:551px;top:157px;font-size:5px">продажа</div>
<div class="in" style="left:573px;top:157px;width:23px">10</div><div class="t" style="left:599px;top:157px;font-size:5.200px">таймер, сек</div>
<div class="cb" style="left:544px;top:169px"></div><div class="t" style="left:550px;top:167.500px;font-size:5px">использовать линию</div>
<div class="cb on" style="left:603px;top:169px"></div><div class="t" style="left:610px;top:167.500px;font-size:5px">лимит</div>
<div class="in" style="left:544px;top:177px;width:17px">1</div><div class="t" style="left:564px;top:177px;font-size:5px">допуск по сигналу в тиках</div>

<div class="cb" style="left:446px;top:193px"></div>
<div class="t" style="left:452px;top:191px;font-size:5px">комбинированный сигнал Дельта/Объем и Имбаланс</div>

<!-- tab strip charts -->
<div class="b" style="left:87px;top:347px;width:713px;height:10px;background:#f0f0f0"></div>
<div class="b" style="left:87px;top:347px;width:35px;height:10px;background:#fff;border:1px solid #bbb;border-top:0"></div>
<div class="t" style="left:91px;top:349px;color:#222">EPH21,M1</div>
<div class="t" style="left:127px;top:349px;color:#999">EPH21,M1</div>
<div class="t" style="left:783px;top:348px;color:#777">‹</div>
<div class="t" style="left:793px;top:348px;color:#777">›</div>

<!-- terminal -->
<div class="b" style="left:0;top:357px;width:800px;height:1px;background:#bbb"></div>
<div class="b" style="left:8px;top:358px;width:792px;height:52px;background:#fff"></div>
<div class="b" style="left:0;top:370px;width:7px;height:50px;background:#c9def0;border:1px solid #b8cde0"></div>
<div class="t" style="left:0;top:394px;width:7px;transform:rotate(-90deg);text-align:center;font-size:5.200px;transform-origin:center">
<span style="display:inline-block;margin-left:-20px;width:47px">Инструменты</span></div>
<div class="t" style="left:1px;top:357px;font-weight:bold;font-size:6px">×</div>
<div class="t" style="left:10px;top:361px">Символ</div>
<div class="t" style="left:105px;top:361px">Тикет</div>
<div class="t" style="right:570px;top:361px">Время</div>
<div class="t" style="right:497px;top:361px">Тип</div>
<div class="t" style="right:423px;top:361px">Объем</div>
<div class="t" style="right:351px;top:361px">Цена</div>
<div class="t" style="right:278px;top:361px">S / L</div>
<div class="t" style="left:573px;top:361px">T / P</div>
<div class="t" style="left:590px;top:360px;font-size:4px">▲</div>
<div class="t" style="right:133px;top:361px">Цена</div>
<div class="t" style="right:4px;top:361px">Прибыль</div>

<div class="b" style="left:8px;top:378px;width:792px;height:10px;background:#c2c2c2"></div>
<div class="b" style="left:378px;top:388px;width:73px;height:9px;background:#66ee55"></div>
<div class="b" style="left:8px;top:369px;width:792px;height:1px;background:#e4e4e4"></div>
<div class="b" style="left:8px;top:397px;width:792px;height:1px;background:#e4e4e4"></div>
<div class="sep" style="left:101px;top:358px;height:20px;background:#e0e0e0"></div>
<div class="sep" style="left:101px;top:388px;height:9px;background:#e0e0e0"></div>
<div class="sep" style="left:232px;top:358px;height:20px;background:#e0e0e0"></div>
<div class="sep" style="left:232px;top:388px;height:9px;background:#e0e0e0"></div>
<div class="sep" style="left:306px;top:358px;height:20px;background:#e0e0e0"></div>
<div class="sep" style="left:306px;top:388px;height:9px;background:#e0e0e0"></div>
<div class="sep" style="left:378px;top:358px;height:20px;background:#e0e0e0"></div>
<div class="sep" style="left:451px;top:358px;height:20px;background:#e0e0e0"></div>
<div class="sep" style="left:524px;top:358px;height:20px;background:#e0e0e0"></div>
<div class="sep" style="left:524px;top:388px;height:9px;background:#e0e0e0"></div>
<div class="sep" style="left:597px;top:358px;height:20px;background:#e0e0e0"></div>
<div class="sep" style="left:597px;top:388px;height:9px;background:#e0e0e0"></div>
<div class="sep" style="left:669px;top:358px;height:20px;background:#e0e0e0"></div>
<div class="sep" style="left:669px;top:388px;height:9px;background:#e0e0e0"></div>

<svg width="20" height="400" viewBox="0 0 20 400" style="left:0;top:0">
<path d="M8 370h5l1.500 1.500v6h-6.500z" fill="#fff" stroke="#e06030" stroke-width=".8"/>
<path d="M8 388h5l1.500 1.500v6h-6.500z" fill="#fff" stroke="#3a8ed0" stroke-width=".8"/>
<circle cx="10.500" cy="382.500" r="2.300" fill="none" stroke="#333" stroke-width=".8"/><path d="M9.500 382l1 1.200 1-1.200" fill="none" stroke="#333" stroke-width=".6"/>
</svg>
<div class="t" style="left:17px;top:370px">eph21</div>
<div class="t" style="left:104px;top:370px">115699780</div>
<div class="t" style="right:568px;top:370px">2021.01.19 06:35:46</div>
<div class="t" style="right:496px;top:370px">sell</div>
<div class="t" style="right:423px;top:370px">2</div>
<div class="t" style="right:350px;top:370px">3768.00</div>
<div class="t" style="right:284px;top:370px">3789.75</div>
<div class="t" style="left:518px;top:370px;color:#777">×</div>
<div class="t" style="right:132px;top:370px">3787.00</div>
<div class="t" style="right:12px;top:370px;color:#3a5ae0">100.00</div>
<div class="t" style="left:792px;top:370px;color:#777">×</div>

<div class="t" style="left:17px;top:379px;font-weight:bold;font-size:5.200px;color:#222">Баланс: 1 277.29 USD&nbsp; Средства: 1 377.29&nbsp; Маржа: 800.00&nbsp; Свободная маржа: 577.29&nbsp; Уровень маржи: 172.16 %</div>
<div class="t" style="right:12px;top:379px;font-weight:bold;color:#222">100.00</div>
<div class="b" style="left:790px;top:379px;width:8px;height:8px;border-radius:50%;background:#e4f2e4"></div>
<div class="b" style="left:791px;top:382px;width:6px;height:2px;background:#52b84a"></div>
<div class="b" style="left:793px;top:380px;width:2px;height:6px;background:#52b84a"></div>

<div class="t" style="left:17px;top:388px">eph21</div>
<div class="t" style="left:104px;top:388px">115699786</div>
<div class="t" style="right:568px;top:388px">2021.01.19 06:35:46</div>
<div class="t" style="right:496px;top:388px">buy limit</div>
<div class="t" style="right:423px;top:388px">2 / 0</div>
<div class="t" style="right:350px;top:388px">3786.75</div>
<div class="t" style="right:132px;top:388px">3787.00</div>
<div class="t" style="right:12px;top:388px">placed</div>
<div class="t" style="left:792px;top:388px;color:#777">×</div>

<!-- bottom tabs -->
<div class="b" style="left:0;top:409px;width:800px;height:1px;background:#aaa"></div>
<div class="b" style="left:8px;top:410px;width:33px;height:10px;background:#fff;border:1px solid #bbb;border-top:0"></div>
<div class="tab" style="left:12px;color:#222">Торговля</div>
<div class="tab" style="left:45px">Активы</div>
<div class="tab" style="left:72px">История</div>
<div class="tab" style="left:103px">Новости</div>
<div class="tab" style="left:133px">Почта<span style="color:#d02020">₇</span></div>
<div class="tab" style="left:160px">Календарь</div>
<div class="tab" style="left:196px">Компания</div>
<div class="tab" style="left:231px">Маркет</div>
<div class="tab" style="left:258px">Алерты</div>
<div class="tab" style="left:286px">Сигналы</div>
<div class="tab" style="left:316px">Статьи</div>
<div class="tab" style="left:341px">Библиотека</div>
<div class="tab" style="left:379px">VPS</div>
<div class="tab" style="left:398px">Эксперты</div>
<div class="tab" style="left:430px">Журнал</div>
<div class="sep" style="left:42px;top:412px;height:7px"></div>
<div class="sep" style="left:68px;top:412px;height:7px"></div>
<div class="sep" style="left:98px;top:412px;height:7px"></div>
<div class="sep" style="left:128px;top:412px;height:7px"></div>
<div class="sep" style="left:156px;top:412px;height:7px"></div>
<div class="sep" style="left:191px;top:412px;height:7px"></div>
<div class="sep" style="left:226px;top:412px;height:7px"></div>
<div class="sep" style="left:253px;top:412px;height:7px"></div>
<div class="sep" style="left:281px;top:412px;height:7px"></div>
<div class="sep" style="left:311px;top:412px;height:7px"></div>
<div class="sep" style="left:336px;top:412px;height:7px"></div>
<div class="sep" style="left:374px;top:412px;height:7px"></div>
<div class="sep" style="left:393px;top:412px;height:7px"></div>
<div class="sep" style="left:425px;top:412px;height:7px"></div>
<div class="tab" style="left:749px;color:#222">Тестер стратегий</div>

<!-- status bar -->
<div class="b" style="left:0;top:421px;width:800px;height:11px;background:#f0f0f0;border-top:1px solid #ddd"></div>
<div class="t" style="left:1px;top:423px;font-size:5.200px">Для вызова справки нажмите F1</div>
<div class="t" style="left:471px;top:423px;font-size:5.200px">Default</div>
<div class="t" style="left:756px;top:423px;font-size:5.200px">2910 / 18 Kb</div>
<div class="sep" style="left:468px;top:423px;height:9px"></div>
<div class="sep" style="left:532px;top:423px;height:9px"></div>
<div class="sep" style="left:578px;top:423px;height:9px"></div>
<div class="sep" style="left:613px;top:423px;height:9px"></div>
<div class="sep" style="left:647px;top:423px;height:9px"></div>
<div class="sep" style="left:679px;top:423px;height:9px"></div>
<div class="sep" style="left:712px;top:423px;height:9px"></div>
<div class="sep" style="left:744px;top:423px;height:9px"></div>
<div class="b" style="left:747px;top:423px;width:4px;height:7px;background:#3a8ed0"></div>
<div class="b" style="left:750px;top:427px;width:4px;height:4px;border-radius:50%;background:#52b84a"></div>
</body></html>
